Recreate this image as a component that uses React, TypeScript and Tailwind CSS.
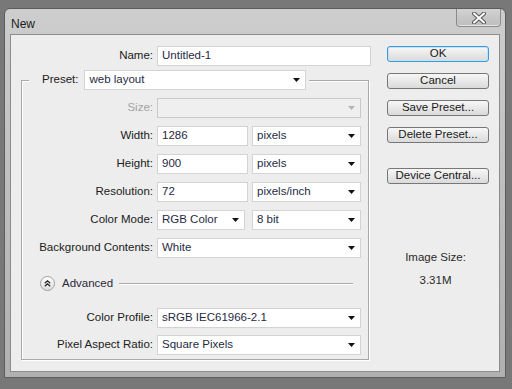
import React from 'react';

const font = { fontFamily: '"Liberation Sans", Arial, sans-serif' };

function Arrow({ disabled }: { disabled?: boolean }) {
  return (
    <svg width="7" height="4" viewBox="0 0 7 4" className="shrink-0">
      <path d="M0 0 H7 L3.5 4 Z" fill={disabled ? '#b4b4b4' : '#111'} />
    </svg>
  );
}

function Field({ value, className }: { value: string; className: string }) {
  return (
    <div className={`h-[20px] flex items-center bg-white border border-[#d3d3d3] pl-[4px] text-[#1f2a44] ${className}`}>
      {value}
    </div>
  );
}

function Select({ value, className, disabled }: { value: string; className: string; disabled?: boolean }) {
  return (
    <div
      className={`h-[20px] flex items-center justify-between border pl-[4px] pr-[5px] text-[#1f2a44] ${
        disabled ? 'bg-[#efefef] border-[#c9c9c9]' : 'bg-white border-[#d3d3d3]'
      } ${className}`}
    >
      <span>{value}</span>
      <Arrow disabled={disabled} />
    </div>
  );
}

function Row({ label, children, dim }: { label: string; children: React.ReactNode; dim?: boolean }) {
  return (
    <div className="flex items-center">
      <span className={`w-[131px] text-right ${dim ? 'text-[#a3a3a3]' : 'text-[#202020]'}`}>{label}</span>
      <div className="ml-[4px] flex gap-[4px]">{children}</div>
    </div>
  );
}

function Btn({ label, primary }: { label: string; primary?: boolean }) {
  return (
    <div
      className={`h-[16px] w-[102px] flex items-center justify-center rounded-[3px] border bg-gradient-to-b from-[#f7f7f7] to-[#dadada] text-[#1a1a1a] ${
        primary ? 'border-[#3c9ad6] shadow-[inset_0_0_0_1px_#bfe3f7]' : 'border-[#777]'
      }`}
    >
      {label}
    </div>
  );
}

export default function App() {
  return (
    <div className="w-[512px] h-[389px] bg-[#787878] pt-[8px] pl-[4px] text-[11.5px] leading-none" style={font}>
      <div className="w-[502px] h-[370px] flex flex-col rounded-t-[6px] border border-[#5c5c5c] bg-gradient-to-b from-[#cdcdcd] to-[#b0b0b0]">
        <div className="h-[25px] flex items-start justify-between">
          <span className="pl-[6px] pt-[9px] text-[12px] text-[#1c1c1c]">New</span>
          <div className="mr-[4px] w-[45px] h-[18px] flex items-center justify-center rounded-b-[4px] border border-t-0 border-[#8a8a8a] bg-gradient-to-b from-[#d2d2d2] to-[#bdbdbd] shadow-[inset_0_-1px_0_#e6e6e6]">
            <svg width="14" height="12" viewBox="0 0 14 12">
              <path d="M2 1.5 L12 10.5 M12 1.5 L2 10.5" stroke="#555" strokeWidth="4" strokeLinecap="round" />
              <path d="M2 1.5 L12 10.5 M12 1.5 L2 10.5" stroke="#fff" strokeWidth="2" strokeLinecap="round" />
            </svg>
          </div>
        </div>

        <div className="mx-[5px] h-[338px] flex bg-[#ededed] border border-[#8c8c8c]">
          {/* form column */}
          <div className="w-[360px] pt-[11px]">
            <div className="flex items-center">
              <span className="w-[142px] text-right text-[#202020]">Name:</span>
              <Field value="Untitled-1" className="ml-[4px] w-[214px] h-[19px]" />
            </div>

            <fieldset className="ml-[10px] mt-[4px] w-[348px] border border-[#a9a9a9] shadow-[inset_1px_1px_0_#fff,1px_1px_0_#fff] pt-[8px] pb-[4px]">
              <legend className="ml-[7px] px-[3px] flex items-center bg-[#ededed]">
                <span className="pl-[10px] text-[#202020]">Preset:</span>
                <Select value="web layout" className="ml-[6px] w-[222px]" />
              </legend>

              <div className="flex flex-col gap-[8px]">
                <Row label="Size:" dim>
                  <Select value="" className="w-[204px] h-[19px]" disabled />
                </Row>
                <Row label="Width:">
                  <Field value="1286" className="w-[91px]" />
                  <Select value="pixels" className="w-[109px]" />
                </Row>
                <Row label="Height:">
                  <Field value="900" className="w-[91px]" />
                  <Select value="pixels" className="w-[109px]" />
                </Row>
                <Row label="Resolution:">
                  <Field value="72" className="w-[91px]" />
                  <Select value="pixels/inch" className="w-[109px]" />
                </Row>
                <Row label="Color Mode:">
                  <Select value="RGB Color" className="w-[88px]" />
                  <Select value="8 bit" className="ml-[3px] w-[109px]" />
                </Row>
                <Row label="Background Contents:">
                  <Select value="White" className="w-[204px]" />
                </Row>
              </div>

              <div className="mt-[18px] pl-[18px] pr-[15px] flex items-center">
                <div className="w-[15px] h-[15px] rounded-full border border-[#a0a0a0] bg-gradient-to-b from-white to-[#dedede] flex items-center justify-center">
                  <svg width="7" height="7" viewBox="0 0 7 7">
                    <path d="M0.8 3.2 L3.5 0.8 L6.2 3.2 M0.8 6.2 L3.5 3.8 L6.2 6.2" stroke="#222" strokeWidth="1.2" fill="none" />
                  </svg>
                </div>
                <span className="ml-[7px] text-[11.5px] text-[#2a2a3a]">Advanced</span>
                <div className="ml-[6px] flex-1 h-[2px] border-t border-[#a8a8a8] border-b border-b-white" />
              </div>

              <div className="mt-[17px] flex flex-col gap-[7px]">
                <Row label="Color Profile:">
                  <Select value="sRGB IEC61966-2.1" className="w-[204px]" />
                </Row>
                <Row label="Pixel Aspect Ratio:">
                  <Select value="Square Pixels" className="w-[204px]" />
                </Row>
              </div>
            </fieldset>
          </div>

          {/* buttons column */}
          <div className="flex-1 pt-[11px] pl-[16px] flex flex-col">
            <div className="flex flex-col gap-[11px]">
              <Btn label="OK" primary />
              <Btn label="Cancel" />
              <Btn label="Save Preset..." />
              <Btn label="Delete Preset..." />
            </div>
            <div className="mt-[25px]">
              <Btn label="Device Central..." />
            </div>
            <div className="w-[102px] mt-[68px] flex flex-col items-center gap-[11px] text-[#2a2a2a]">
              <span className="pr-[5px]">Image Size:</span>
              <span className="pr-[5px]">3.31M</span>
            </div>
          </div>
        </div>
      </div>
    </div>
  );
}
